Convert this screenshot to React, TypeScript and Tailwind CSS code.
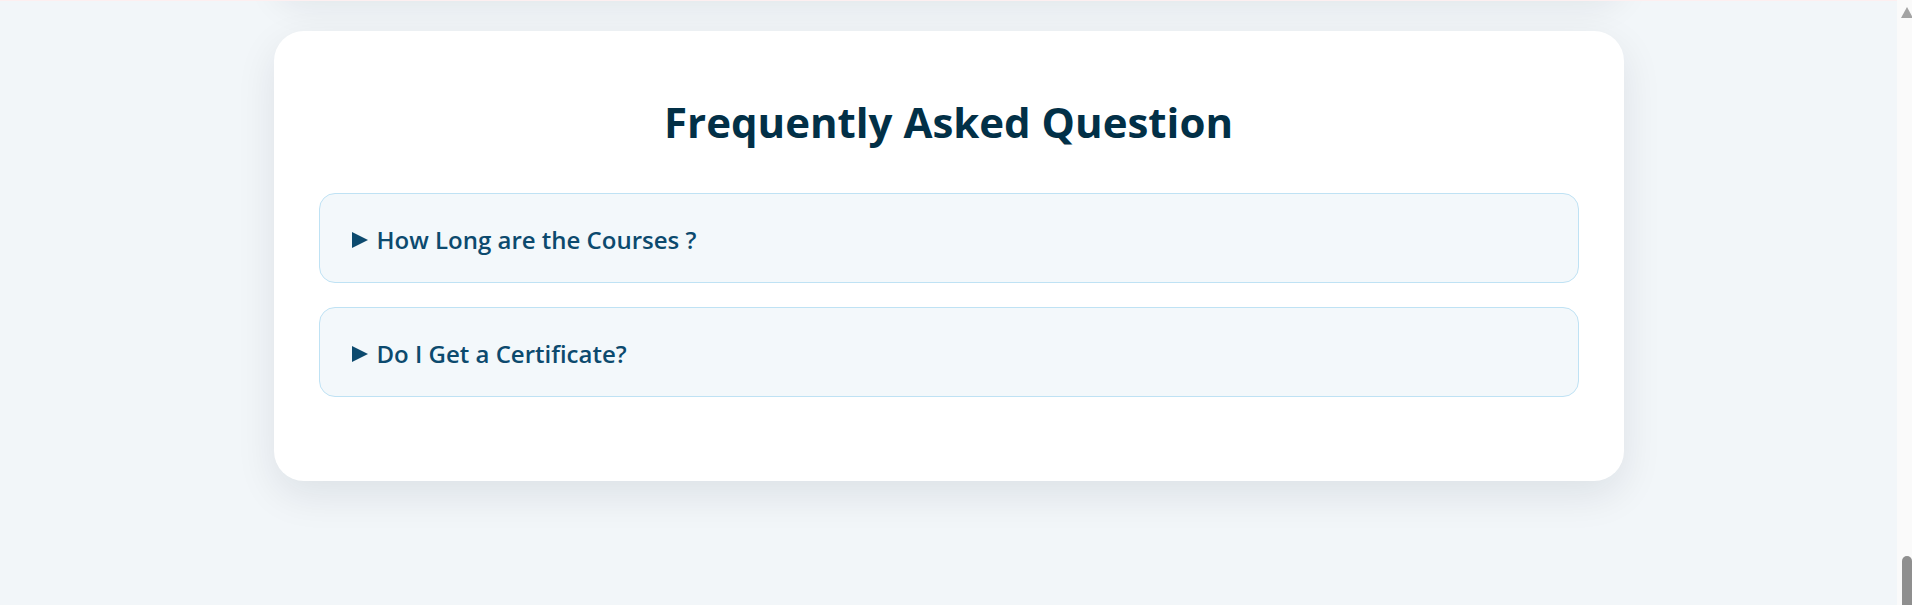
import React from "react";

const faqs = ["How Long are the Courses ?", "Do I Get a Certificate?"];

function Triangle() {
  return (
    <svg width="16" height="16" viewBox="0 0 16 16" className="h-[16px] w-[16px] shrink-0">
      <polygon points="0,0 16,8 0,16" fill="#0c4a6e" />
    </svg>
  );
}

export default function App() {
  return (
    <div className="flex h-[605px] w-full overflow-hidden bg-[#f2f6f9] font-['Open_Sans','Noto_Sans',sans-serif]">
      <div className="flex flex-1 flex-col items-center">
        <div className="-mt-[200px] h-[200px] w-[1350px] shrink-0 rounded-[30px] bg-[#f2f6f9] shadow-[0_8px_34px_rgba(15,23,42,0.07)]" />
        <div className="h-px shrink-0 self-stretch bg-[#fdeff0]" />
        <section className="mt-[30px] w-[1350px] shrink-0 rounded-[30px] bg-white px-[45px] pt-[63px] pb-[84px] shadow-[0_14px_40px_rgba(15,23,42,0.09)]">
          <h2 className="mb-[43px] text-center text-[42px] leading-[56px] font-bold text-[#023047]">
            Frequently Asked Question
          </h2>
          <div className="flex flex-col gap-[24px]">
            {faqs.map((q) => (
              <div
                key={q}
                className="flex h-[90px] items-center gap-[9px] rounded-2xl border border-[#bfe2f4] bg-[#f3f8fb] pl-[32px] pt-[3px]"
              >
                <Triangle />
                <span className="text-[24px] leading-[30px] font-semibold text-[#0c4a6e]">{q}</span>
              </div>
            ))}
          </div>
        </section>
      </div>
      <div className="flex w-[15px] shrink-0 flex-col justify-between bg-[#fafafa]">
        <svg width="15" height="18" viewBox="0 0 15 18" className="mt-[2px]">
          <polygon points="4,16 10,5 16,16" fill="#a3a3a3" />
        </svg>
        <div className="ml-[5px] h-[49px] w-[10px] rounded-t-[5px] bg-[#8f8f8f]" />
      </div>
    </div>
  );
}
